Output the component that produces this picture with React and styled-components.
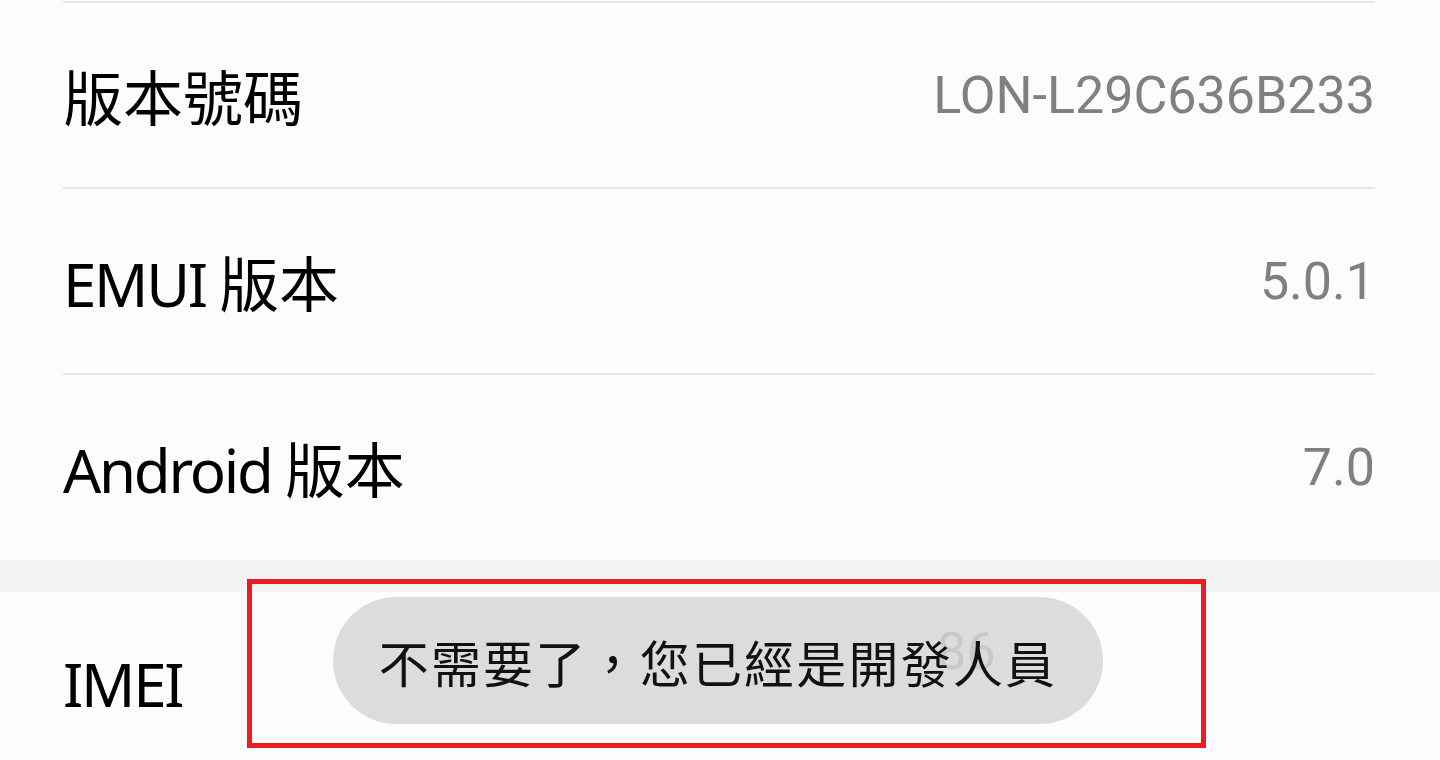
import styled, { createGlobalStyle } from "styled-components";

const GlobalStyle = createGlobalStyle`
html, body {
  margin: 0;
  padding: 0;
  background: #fcfcfc;
  overflow: hidden;
}
`;

const Screen = styled.div`
position: relative;
width: 1440px;
height: 760px;
background: #fcfcfc;
padding-top: 1px;
box-sizing: border-box;
overflow: hidden;
`;

const List = styled.div`
display: flex;
flex-direction: column;
margin: 0 65px 0 63px;
`;

const Row = styled.div`
display: flex;
align-items: center;
justify-content: space-between;
height: 184px;
border-top: ${(p) => (p.$line ? "2px solid #e6e6e6" : "none")};
`;

const Label = styled.span`
font-family: "Noto Sans", "Noto Sans CJK TC", sans-serif;
font-size: 60px;
color: #000;
`;

const Latin = styled.span`
letter-spacing: -2.3px;
`;

const Value = styled.span`
font-family: Roboto, "Noto Sans", sans-serif;
font-size: 52px;
color: #808080;
`;

const Gap = styled.div`
height: 32px;
background: #f4f4f4;
margin-top: 1px;
`;

const Highlight = styled.div`
position: absolute;
left: 247px;
top: 579px;
width: 959px;
height: 169px;
box-sizing: border-box;
border: 5px solid #ed1c24;
`;

const Toast = styled.div`
position: absolute;
left: 81px;
top: 13px;
width: 770px;
height: 127px;
border-radius: 64px;
background: #dcdcdc;
display: flex;
align-items: center;
justify-content: center;
`;

const Ghost = styled.span`
position: absolute;
left: 604px;
top: 24px;
font-family: Roboto, sans-serif;
font-size: 52px;
color: #c8c8c8;
`;

const ToastText = styled.span`
position: relative;
font-family: "Noto Sans CJK TC", sans-serif;
font-size: 50px;
letter-spacing: 2.2px;
color: #111;
`;

const rows = [
  { latin: "", cjk: "版本號碼", value: "LON-L29C636B233" },
  { latin: "EMUI ", cjk: "版本", value: "5.0.1" },
  { latin: "Android ", cjk: "版本", value: "7.0" },
];

export default function App() {
  return (
    <Screen>
      <GlobalStyle />
      <List>
        {rows.map((r) => (
          <Row key={r.latin + r.cjk} $line>
            <Label>
              {r.latin && <Latin>{r.latin}</Latin>}
              {r.cjk}
            </Label>
            <Value>{r.value}</Value>
          </Row>
        ))}
      </List>
      <Gap />
      <List>
        <Row>
          <Label>
            <Latin>IMEI</Latin>
          </Label>
        </Row>
      </List>
      <Highlight>
        <Toast>
          <Ghost>86</Ghost>
          <ToastText>不需要了，您已經是開發人員</ToastText>
        </Toast>
      </Highlight>
    </Screen>
  );
}
